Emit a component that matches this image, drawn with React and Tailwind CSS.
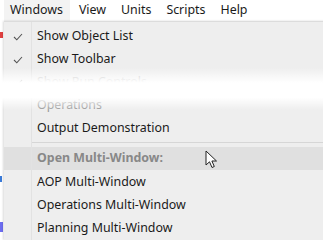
import React from 'react';

const font = { fontFamily: '"Noto Sans", "Open Sans", sans-serif' };

function Check() {
  return (
    <svg width="10" height="8" viewBox="0 0 10 8" className="text-[#555]">
      <path d="M1 4 L3.8 6.8 L9 1" fill="none" stroke="currentColor" strokeWidth="1.1" />
    </svg>
  );
}

function Cursor() {
  return (
    <svg width="14" height="20" viewBox="0 0 14 20">
      <path d="M1 1 L1 15 L4.5 11.8 L7 17.5 L9.3 16.5 L6.9 11 L11.5 11 Z" fill="#fff" stroke="#222" strokeWidth="1" strokeLinejoin="round" />
    </svg>
  );
}

function Item({ label, checked, className = '' }) {
  return (
    <div className={`flex h-[23px] items-center ${className}`}>
      <div className="flex w-[27px] shrink-0 justify-center">{checked && <Check />}</div>
      <div className="pl-[6px]">{label}</div>
    </div>
  );
}

export default function App() {
  const menus = ['Windows', 'View', 'Units', 'Scripts', 'Help'];

  return (
    <div className="relative h-[240px] w-[323px] overflow-hidden bg-white text-[12.4px] text-[#1a1a1a]" style={font}>
      {/* menu bar */}
      <div className="flex h-[21px] items-center gap-[3px] pl-[4px]">
        {menus.map((m, i) => (
          <div key={m} className={`flex h-[21px] items-center px-[6px] ${i === 0 ? 'bg-[#f3f3f3] pr-[7px]' : ''}`}>
            {m}
          </div>
        ))}
      </div>

      {/* background app bits peeking out on the left */}
      <div className="absolute left-0 top-[32px] h-[6px] w-[3px] bg-[#e04040]" />
      <div className="absolute left-0 top-[176px] h-[6px] w-[2px] bg-[#3b7bd8]" />
      <div className="absolute left-0 top-[222px] h-[10px] w-[3px] bg-[#6d6df0]" />

      {/* dropdown */}
      <div className="absolute left-[4px] top-[21px] w-[330px] border-t border-[#dcdcdc] bg-[#eeeeee] shadow-[-1px_0_2px_rgba(0,0,0,0.15)]">
        <div className="relative">
          <div className="absolute bottom-0 left-[27px] top-0 w-px bg-[#e2e2e2]" />
          <div className="pt-[3px]">
            <Item label="Show Object List" checked />
            <Item label="Show Toolbar" checked />
            <Item label="Show Run Controls" checked className="text-[#bbb]" />
            <Item label="Operations" className="text-[#999]" />
            <Item label="Output Demonstration" />
            <div className="ml-[27px] mb-[4px] mt-[2px] h-px bg-[#d6d6d6]" />
            <div className="flex h-[23px] items-center bg-[#e0e0e0] font-bold text-[#888]">
              <div className="w-[27px] shrink-0" />
              <div className="pl-[6px]">Open Multi-Window:</div>
            </div>
            <div className="pt-[1px]">
              <Item label="AOP Multi-Window" />
              <Item label="Operations Multi-Window" />
              <Item label="Planning Multi-Window" />
            </div>
          </div>
        </div>
      </div>

      <div className="pointer-events-none absolute left-0 right-0 top-[68px] h-[42px] bg-[linear-gradient(to_bottom,rgba(255,255,255,0)_0%,#fff_35%,#fff_70%,rgba(255,255,255,0)_100%)]" />

      <div className="absolute left-[205px] top-[150px]">
        <Cursor />
      </div>
    </div>
  );
}
